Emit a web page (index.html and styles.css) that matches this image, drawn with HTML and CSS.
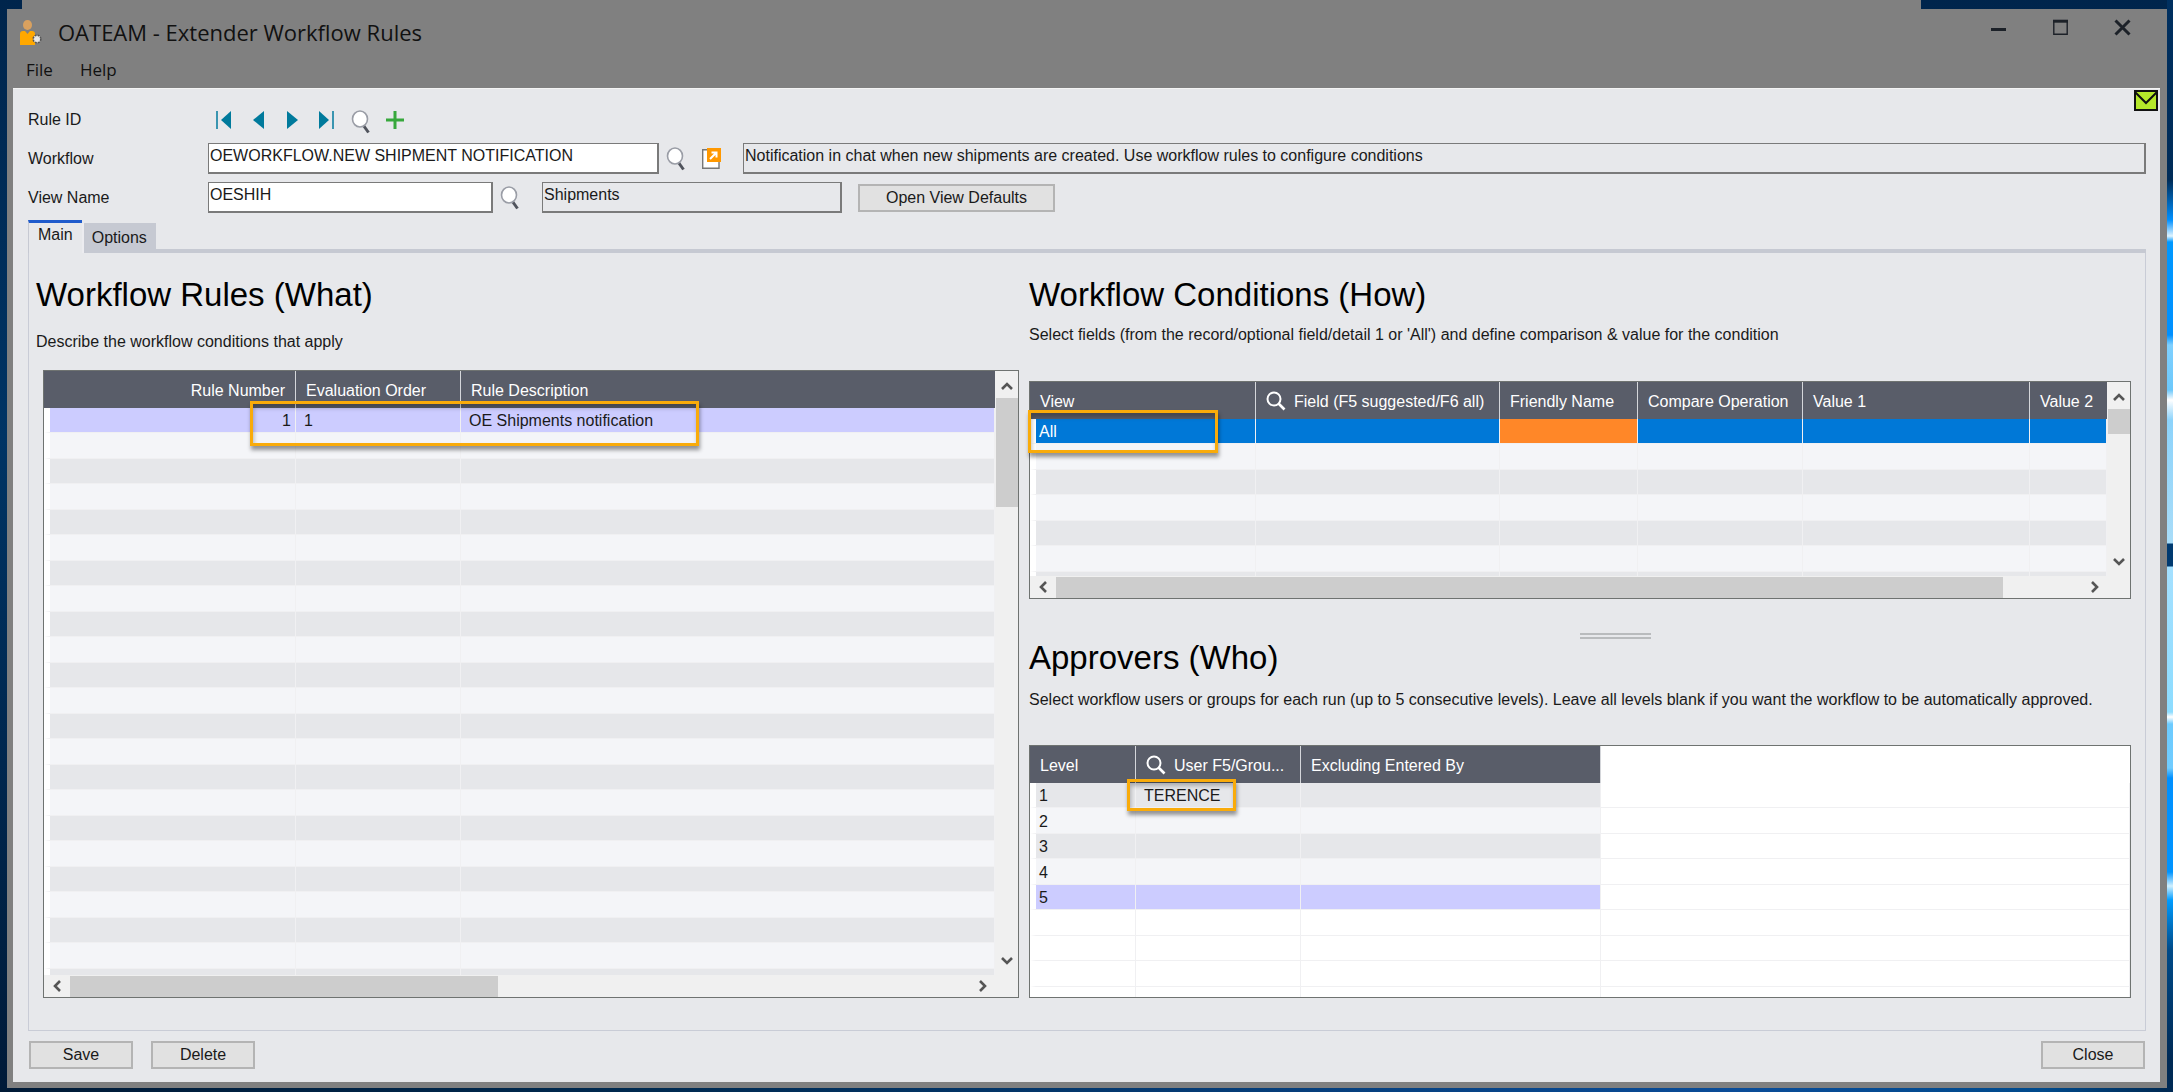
FILE: index.html
```html
<!DOCTYPE html>
<html lang="en">
<head>
<meta charset="utf-8">
<title>OATEAM - Extender Workflow Rules</title>
<link rel="stylesheet" href="styles.css">
</head>
<body>
<svg class="defs" aria-hidden="true">
  <symbol id="lens" viewBox="0 0 20 24">
    <path d="M12.5 15.5l5 7" stroke="#50535c" stroke-width="3" fill="none"/>
    <ellipse cx="9" cy="9" rx="7.5" ry="8" fill="#fff" stroke="#9a9da6" stroke-width="1.6"/>
  </symbol>
  <symbol id="find" viewBox="0 0 20 20">
    <circle cx="8" cy="8" r="6.5" fill="none" stroke="#fff" stroke-width="2"/>
    <path d="M12.5 12.5l6 6" stroke="#fff" stroke-width="2.6"/>
  </symbol>
  <symbol id="chev" viewBox="0 0 12 12">
    <path d="M1 9l5-5 5 5" fill="none" stroke="#555" stroke-width="2.6"/>
  </symbol>
</svg>

<div class="window">
  <header class="titlebar">
    <svg class="app-icon" viewBox="0 0 22 25"><ellipse cx="7.500" cy="5" rx="4.500" ry="5" fill="#d9a15f"/><path d="M0 14q0-3 3-3h2l2.500 3 2.500-3h2q3 0 3 3v11H0z" fill="#ffa800"/><circle cx="17" cy="19" r="3.8" fill="#ddd" stroke="#555" stroke-width="1.600" stroke-dasharray="2 1"/><circle cx="17" cy="19" r="2.600" fill="#e6e6e6"/></svg>
    <h1 class="title">OATEAM - Extender Workflow Rules</h1>
    <div class="controls">
      <button type="button" aria-label="Minimize"><svg viewBox="0 0 18 18"><path d="M1 10.5h15" stroke="#1c2128" stroke-width="3"/></svg></button>
      <button type="button" aria-label="Maximize"><svg viewBox="0 0 18 18"><path d="M1.8 2v13.2h13.4V2" fill="none" stroke="#1c2128" stroke-width="1.4"/><path d="M1 2.2h15" stroke="#1c2128" stroke-width="3"/></svg></button>
      <button type="button" aria-label="Close window"><svg viewBox="0 0 18 18"><path d="M1.500 1.500l14 14M15.500 1.500l-14 14" stroke="#1c2128" stroke-width="3"/></svg></button>
    </div>
  </header>
  <nav class="menu"><a href="#">File</a><a href="#">Help</a></nav>

  <main class="client">
    <svg class="mail" viewBox="0 0 24 21"><path d="M1 1h22v19H1z" fill="#b5e82a" stroke="#111" stroke-width="2"/><path d="M1.500 2.500L12 13 22.500 2.500" fill="none" stroke="#111" stroke-width="2"/></svg>

    <form class="form">
      <div class="row">
        <span class="label">Rule ID</span>
        <div class="nav">
          <button type="button" aria-label="First"><svg viewBox="0 0 20 20"><path d="M2 1v18" stroke="#007a9c" stroke-width="1.500"/><path d="M16 1v18L6 10z" fill="#007a9c"/></svg></button>
          <button type="button" aria-label="Previous"><svg viewBox="0 0 20 20"><path d="M15 1v18L4 10z" fill="#007a9c"/></svg></button>
          <button type="button" aria-label="Next"><svg viewBox="0 0 20 20"><path d="M4 1v18l11-9z" fill="#007a9c"/></svg></button>
          <button type="button" aria-label="Last"><svg viewBox="0 0 20 20"><path d="M2 1v18l10-9z" fill="#007a9c"/><path d="M16 1v18" stroke="#007a9c" stroke-width="1.500"/></svg></button>
          <button type="button" aria-label="Find rule"><svg class="tall"><use href="#lens"/></svg></button>
          <button type="button" aria-label="New rule"><svg viewBox="0 0 20 20"><path d="M1 10h18M10 1v18" stroke="#37a83c" stroke-width="3"/></svg></button>
        </div>
      </div>
      <div class="row">
        <label class="label" for="workflow">Workflow</label>
        <input class="field workflow" id="workflow" type="text" value="OEWORKFLOW.NEW SHIPMENT NOTIFICATION">
        <button class="icon" type="button" aria-label="Find workflow"><svg class="tall"><use href="#lens"/></svg></button>
        <button class="icon" type="button" aria-label="Open workflow"><svg viewBox="0 0 20 22"><path d="M1.700 1.700h16.300v18.600H1.700z" fill="#fff" stroke="#777" stroke-width="1.400"/><path d="M6 0h14v14H6z" fill="#ff9800"/><path d="M9 11l6-6M10.500 4.500h5v5" fill="none" stroke="#fff" stroke-width="2"/></svg></button>
        <input class="field readonly about" type="text" readonly aria-label="Workflow description" value="Notification in chat when new shipments are created. Use workflow rules to configure conditions">
      </div>
      <div class="row">
        <label class="label" for="view">View Name</label>
        <input class="field view" id="view" type="text" value="OESHIH">
        <button class="icon" type="button" aria-label="Find view"><svg class="tall"><use href="#lens"/></svg></button>
        <input class="field readonly view-about" type="text" readonly aria-label="View description" value="Shipments">
        <button class="btn wide" type="button">Open View Defaults</button>
      </div>
    </form>

    <div class="tabs" role="tablist">
      <button class="tab active" type="button" role="tab" aria-selected="true">Main</button>
      <button class="tab" type="button" role="tab" aria-selected="false">Options</button>
    </div>

    <div class="panel">
      <section class="what">
        <h2>Workflow Rules (What)</h2>
        <p>Describe the workflow conditions that apply</p>
        <div class="frame">
          <div class="grid">
            <div class="rows">
              <table>
                <colgroup><col class="c-num"><col class="c-eval"><col></colgroup>
                <thead><tr><th class="right">Rule Number</th><th>Evaluation Order</th><th>Rule Description</th></tr></thead>
                <tbody>
                  <tr class="current"><td class="right">1</td><td>1</td><td>OE Shipments notification</td></tr>
                  <tr><td></td><td></td><td></td></tr>
                  <tr><td></td><td></td><td></td></tr>
                  <tr><td></td><td></td><td></td></tr>
                  <tr><td></td><td></td><td></td></tr>
                  <tr><td></td><td></td><td></td></tr>
                  <tr><td></td><td></td><td></td></tr>
                  <tr><td></td><td></td><td></td></tr>
                  <tr><td></td><td></td><td></td></tr>
                  <tr><td></td><td></td><td></td></tr>
                  <tr><td></td><td></td><td></td></tr>
                  <tr><td></td><td></td><td></td></tr>
                  <tr><td></td><td></td><td></td></tr>
                  <tr><td></td><td></td><td></td></tr>
                  <tr><td></td><td></td><td></td></tr>
                  <tr><td></td><td></td><td></td></tr>
                  <tr><td></td><td></td><td></td></tr>
                  <tr><td></td><td></td><td></td></tr>
                  <tr><td></td><td></td><td></td></tr>
                  <tr><td></td><td></td><td></td></tr>
                  <tr><td></td><td></td><td></td></tr>
                  <tr><td></td><td></td><td></td></tr>
                  <tr><td></td><td></td><td></td></tr>
                </tbody>
              </table>
            </div>
            <div class="vbar"><svg><use href="#chev"/></svg><div class="thumb" style="height:109px"></div><svg class="down"><use href="#chev"/></svg></div>
            <div class="hbar"><svg class="prev"><use href="#chev"/></svg><div class="thumb" style="width:45%"></div><svg class="next"><use href="#chev"/></svg></div>
          </div>
          <div class="mark mark-rule"></div>
        </div>
      </section>

      <div class="side">
        <section class="how">
          <h2>Workflow Conditions (How)</h2>
          <p>Select fields (from the record/optional field/detail 1 or 'All') and define comparison &amp; value for the condition</p>
          <div class="frame">
            <div class="grid">
              <div class="rows">
                <table>
                  <colgroup><col class="c-view"><col class="c-field"><col class="c-name"><col class="c-op"><col class="c-val"><col></colgroup>
                  <thead><tr><th class="lead">View</th><th><svg><use href="#find"/></svg>Field (F5 suggested/F6 all)</th><th>Friendly Name</th><th>Compare Operation</th><th>Value 1</th><th>Value 2</th></tr></thead>
                  <tbody>
                    <tr class="selected"><td class="lead">All</td><td></td><td class="hot"></td><td></td><td></td><td></td></tr>
                    <tr><td></td><td></td><td></td><td></td><td></td><td></td></tr>
                    <tr><td></td><td></td><td></td><td></td><td></td><td></td></tr>
                    <tr><td></td><td></td><td></td><td></td><td></td><td></td></tr>
                    <tr><td></td><td></td><td></td><td></td><td></td><td></td></tr>
                    <tr><td></td><td></td><td></td><td></td><td></td><td></td></tr>
                    <tr><td></td><td></td><td></td><td></td><td></td><td></td></tr>
                  </tbody>
                </table>
              </div>
              <div class="vbar"><svg><use href="#chev"/></svg><div class="thumb" style="height:25px"></div><svg class="down"><use href="#chev"/></svg></div>
              <div class="hbar"><svg class="prev"><use href="#chev"/></svg><div class="thumb" style="width:88%"></div><svg class="next"><use href="#chev"/></svg></div>
            </div>
            <div class="mark mark-view"></div>
          </div>
        </section>

        <div class="splitter"></div>

        <section class="who">
          <h2>Approvers (Who)</h2>
          <p>Select workflow users or groups for each run (up to 5 consecutive levels). Leave all levels blank if you want the workflow to be automatically approved.</p>
          <div class="frame">
            <div class="grid plain">
              <div class="rows">
                <table>
                  <colgroup><col class="c-level"><col class="c-user"><col class="c-excl"><col></colgroup>
                  <thead><tr><th class="lead">Level</th><th><svg><use href="#find"/></svg>User F5/Grou...</th><th>Excluding Entered By</th><td class="blank"></td></tr></thead>
                  <tbody>
                    <tr><td class="lead">1</td><td class="user">TERENCE</td><td></td><td class="blank"></td></tr>
                    <tr><td class="lead">2</td><td></td><td></td><td class="blank"></td></tr>
                    <tr><td class="lead">3</td><td></td><td></td><td class="blank"></td></tr>
                    <tr><td class="lead">4</td><td></td><td></td><td class="blank"></td></tr>
                    <tr class="current"><td class="lead">5</td><td></td><td></td><td class="blank"></td></tr>
                    <tr class="empty"><td></td><td></td><td></td><td></td></tr>
                    <tr class="empty"><td></td><td></td><td></td><td></td></tr>
                    <tr class="empty"><td></td><td></td><td></td><td></td></tr>
                    <tr class="empty"><td></td><td></td><td></td><td></td></tr>
                  </tbody>
                </table>
              </div>
            </div>
            <div class="mark mark-user"></div>
          </div>
        </section>
      </div>
    </div>

    <footer class="actions">
      <button class="btn" type="button">Save</button>
      <button class="btn" type="button">Delete</button>
      <button class="btn close" type="button">Close</button>
    </footer>
  </main>
</div>
</body>
</html>
```

FILE: styles.css
```css
* { box-sizing: border-box; }

body {
  margin: 0;
  height: 100vh;
  min-height: 900px;
  padding: 9px 6px 4px 7px;
  font: 16px/20px "Liberation Sans", Arial, sans-serif;
  color: #1a1a1a;
  background:
    linear-gradient(#003060 0, #002c58 180px, #0090ff 220px, #dff4ff 236px, #0098ff 242px, #0090ff 335px, #7fd0ff 345px, #6cc8fb 390px, #fff 400px, #8cd3fb 420px, #a8dcf8 543px, #003a70 544px, #003a70 566px, #a4e0ff 567px, #8cdcff 712px, #fff 717px, #6ccbff 724px, #70ccff 768px, #0090ff 778px, #0094ff 872px, #d0f0ff 886px, #009cff 900px, #004a88 950px, #002a55 1060px) right / 6px 100% no-repeat,
    linear-gradient(90deg, #001a36, #002a50 30%, #0a4c98 80%, #004a8c 94%, #002850) bottom / 100% 4px no-repeat,
    linear-gradient(#00254c, #003464 40%, #001a38) #00254c;
}

h1, h2, p { margin: 0; font-weight: normal; }

button, input { font: inherit; color: inherit; }

button {
  margin: 0;
  padding: 0;
  border: 0;
  background: none;
}

.defs {
  position: absolute;
  width: 0;
  height: 0;
}

.window {
  position: relative;
  display: flex;
  flex-direction: column;
  height: 100%;
  padding: 0 7px 6px 6px;
  background: #808080;
}

/* Upper lip of the frame, narrower than the window */
.window::before {
  content: "";
  position: absolute;
  top: -9px;
  left: 15px;
  right: 246px;
  height: 9px;
  background: #808080;
}

.titlebar {
  display: flex;
  align-items: center;
  height: 46px;
  padding: 0 28px 0 7px;
}

.app-icon { width: 22px; height: 25px; }

.title {
  flex: 1;
  margin-left: 16px;
  font: 22px/30px "Open Sans", "Noto Sans", sans-serif;
  color: #111;
}

.controls {
  display: flex;
  gap: 44px;
  padding-bottom: 8px;
}

.controls button, .controls svg {
  display: block;
  width: 18px;
  height: 18px;
}

.menu {
  display: flex;
  gap: 27px;
  height: 33px;
  padding: 3px 13px;
  font: 17px/24px "Open Sans", "Noto Sans", sans-serif;
}

.menu a { color: #111; text-decoration: none; }

.client {
  position: relative;
  display: flex;
  flex: 1;
  flex-direction: column;
  min-height: 0;
  padding: 15px 14px 13px 15px;
  background: #e7e8eb;
  border-top: 1px solid #f4f4f4;
}

.mail {
  position: absolute;
  top: 1px;
  right: 2px;
  width: 24px;
  height: 21px;
}

.form { display: grid; gap: 8px; }

.row {
  display: flex;
  align-items: center;
  height: 31px;
}

.label { width: 180px; }

.nav { display: flex; gap: 14px; padding-left: 7px; }

.nav button, .nav svg { display: block; width: 20px; height: 20px; }

.nav svg.tall, .icon svg.tall { width: 20px; height: 24px; }

.icon { margin-left: 7px; }

.icon + .icon { margin-left: 15px; }

.icon svg { display: block; width: 20px; height: 22px; }

.field {
  height: 31px;
  padding: 0 1px 4px;
  border: 2px solid #7a7a7a;
  border-width: 1px 2px 2px 1px;
  background: #fff;
}

.readonly { background: transparent; }

.workflow { width: 451px; }

.view { width: 285px; }

.about { flex: 1; margin-left: 22px; }

.view-about { width: 300px; margin-left: 22px; }

.btn {
  width: 104px;
  height: 28px;
  border: 2px solid #b4b4b4;
  background: #e1e1e1;
}

.btn.wide { width: 197px; margin-left: 16px; }

.tabs {
  display: flex;
  align-items: flex-end;
  margin-top: 7px;
}

.tabs::after {
  content: "";
  flex: 1;
  height: 4px;
  background: #c6c9d2;
}

.tab {
  height: 30px;
  padding: 0 9px 0 8px;
  border-left: 2px solid #ececf0;
  background: #c6c9d2;
}

.tab.active {
  height: 33px;
  padding: 0 9px 7px;
  border-left: 1px solid #c6c9d2;
  border-top: 3px solid #1f5bcc;
  background: #e7e8eb;
}

.panel {
  display: grid;
  grid-template-columns: 983fr 1102fr;
  grid-template-rows: minmax(0, 1fr);
  gap: 10px;
  flex: 1;
  min-height: 0;
  padding: 23px 14px 32px 7px;
  border: 1px solid #c9ccd6;
  border-top: 0;
}

.panel h2 {
  font-size: 33px;
  line-height: 38px;
  color: #000;
}

.panel section, .side {
  display: flex;
  flex-direction: column;
  min-width: 0;
  min-height: 0;
}

.frame { position: relative; min-height: 0; }

.what p { margin: 18px 0; }
.what .frame { flex: 1; margin-left: 7px; }

.how p { margin: 11px 0 36px; }
.how .frame { height: 218px; }

.who { flex: 1; }
.who p { margin: 13px 0 35px; }
.who .frame { flex: 1; }

.splitter {
  width: 71px;
  height: 6px;
  margin: 34px 0 0 50%;
  border: 2px solid #b9bbbd;
  border-width: 2px 0;
}

.grid {
  display: grid;
  grid-template-columns: minmax(0, 1fr) 23px;
  grid-template-rows: minmax(0, 1fr) 22px;
  height: 100%;
  border: 1px solid #6f7371;
  background: #f0f0f0;
}

.grid.plain { display: block; background: #fff; }

.rows { height: 100%; overflow: hidden; background: #fff; }

table {
  width: 100%;
  table-layout: fixed;
  border-spacing: 0;
}

th {
  height: 37px;
  padding: 2px 0 0 10px;
  border-right: 1px solid #d4d6da;
  background: #595d69;
  color: #fff;
  font-weight: normal;
  text-align: left;
  white-space: nowrap;
}

th:last-child { border-right: 0; }

th svg {
  width: 20px;
  height: 20px;
  margin-right: 8px;
  vertical-align: -4px;
}

td {
  height: 25px;
  padding: 2px 7px 0 8px;
  border-right: 1px solid #f0f0f2;
  border-bottom: 1px solid #f0f0f2;
  background: #f4f5f8;
  line-height: 18px;
  white-space: nowrap;
}

tr:nth-child(even) td { height: 26px; }

tbody tr:nth-child(odd) td { background: #e6e7ea; }

tbody td:first-child { border-left: 6px solid #fff; }

th.right { padding-right: 10px; }
.right { text-align: right; }
td.right { padding-right: 4px; }
th.lead { padding-left: 10px; }
td.lead { padding-left: 3px; }

tbody tr.current td { background: #ccccff; }
tbody tr.selected td { background: #0078d7; color: #fff; }
tbody tr.selected td.hot { background: #ff8728; }
tbody tr.empty td, tr td.blank, tbody tr td.blank { background: #fff; }
thead td.blank { border: 0; }

.c-num { width: 252px; }
.c-eval { width: 165px; }
.c-view { width: 226px; }
.c-field { width: 244px; }
.c-name { width: 138px; }
.c-op { width: 165px; }
.c-val { width: 227px; }
.c-level { width: 106px; }
.c-user { width: 165px; }
.c-excl { width: 300px; }

.vbar {
  display: flex;
  flex-direction: column;
  padding-left: 1px;
}

.vbar svg, .hbar svg {
  flex: none;
  width: 12px;
  height: 12px;
}

.vbar svg { margin: 9px 5px 6px; }
.vbar .down { margin: auto 5px 8px; transform: rotate(180deg); }

.hbar { display: flex; align-items: center; margin-right: 1px; }
.hbar .prev { margin: 0 7px; transform: rotate(-90deg); }
.hbar .next { margin: 0 5px 0 auto; transform: rotate(90deg); }
.hbar .thumb { flex: 0 1 auto; height: 21px; }

.thumb { background: #cdcdcd; }

/* Callouts laid over the grids */
.mark {
  position: absolute;
  border: 3px solid #f9ab0a;
  box-shadow: 1px 4px 4px rgba(0, 0, 0, .4), inset 1px 4px 4px rgba(0, 0, 0, .25);
}

.mark-rule { top: 31px; left: 207px; width: 449px; height: 45px; }
.mark-view { top: 29px; left: -1px; width: 190px; height: 43px; }
.mark-user { top: 34px; left: 98px; width: 109px; height: 32px; }

.actions {
  display: flex;
  gap: 18px;
  padding: 10px 1px 0;
}

.actions .close { margin-left: auto; }
```
